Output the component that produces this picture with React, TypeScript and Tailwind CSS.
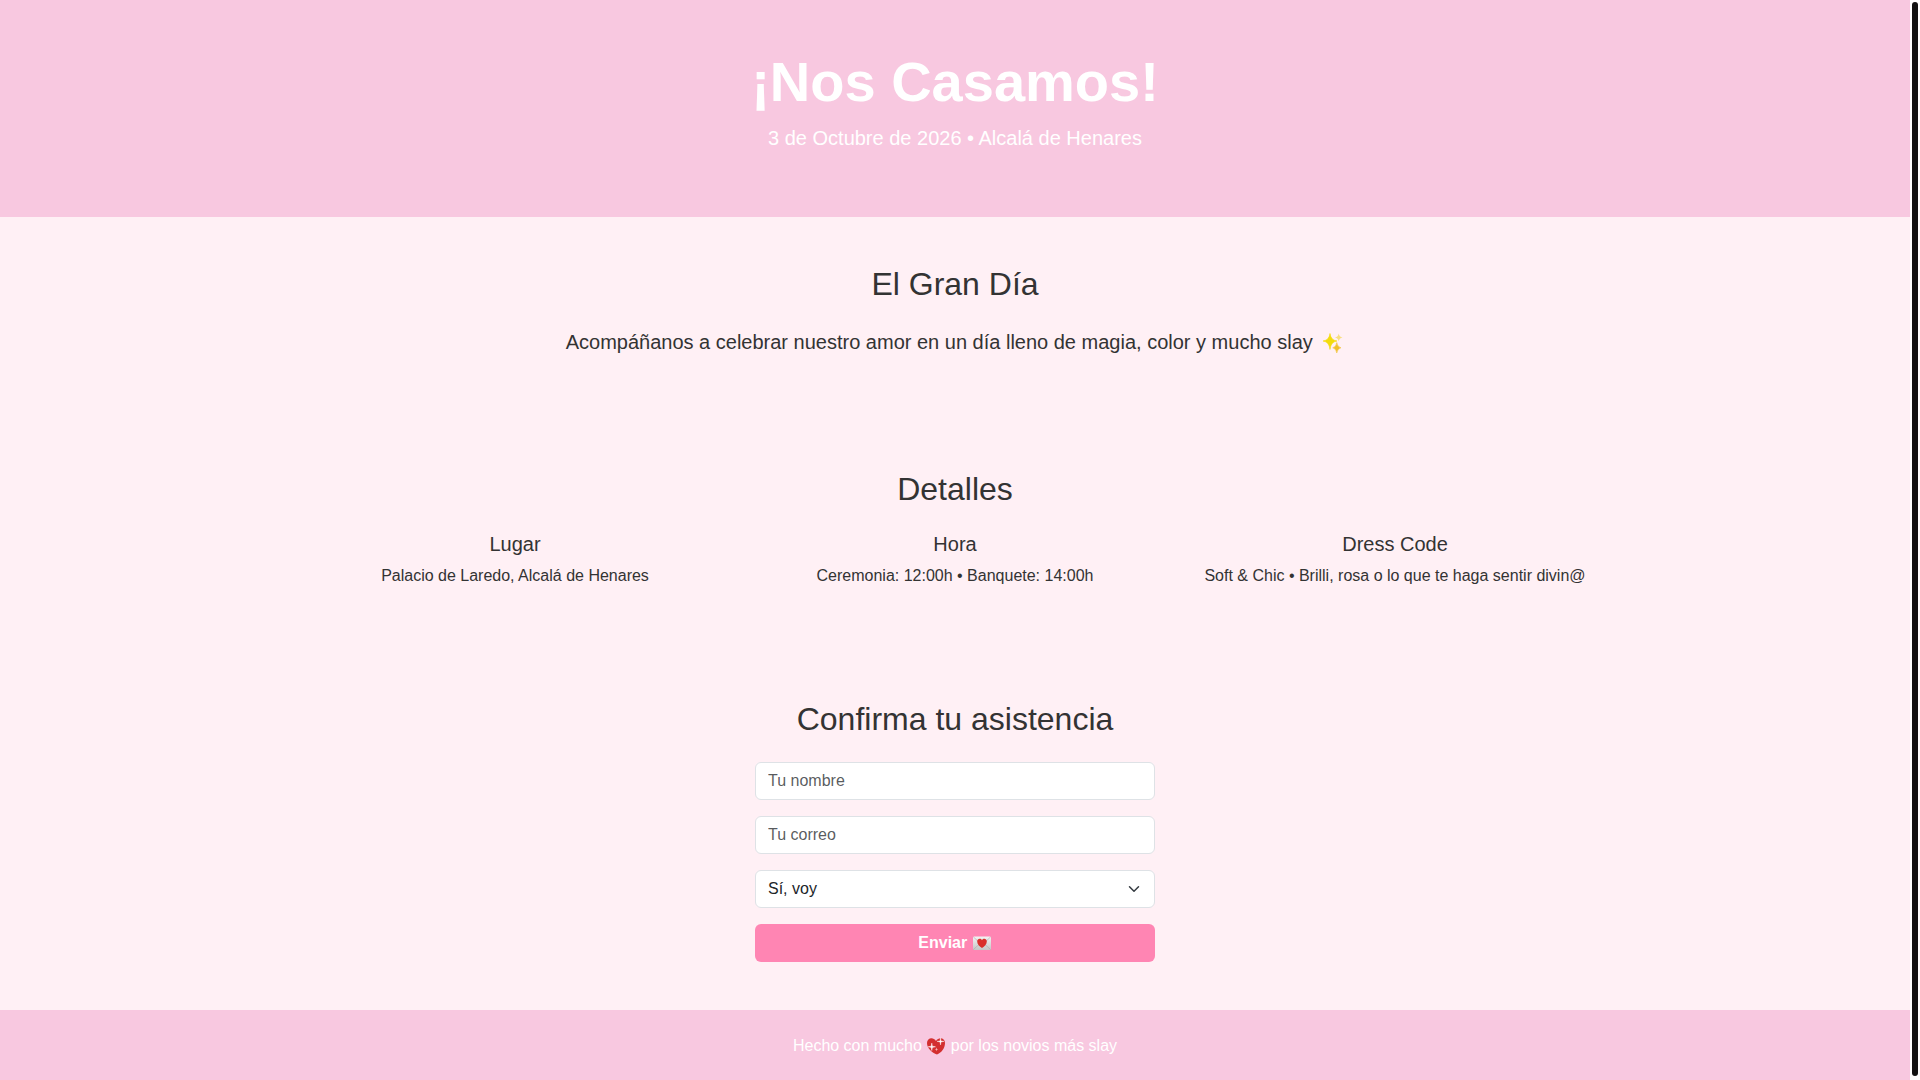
import React, { useState } from 'react';

interface SectionProps {
  title: string;
  children: React.ReactNode;
}

const details = [
  { title: 'Lugar', text: 'Palacio de Laredo, Alcalá de Henares' },
  { title: 'Hora', text: 'Ceremonia: 12:00h • Banquete: 14:00h' },
  { title: 'Dress Code', text: 'Soft & Chic • Brilli, rosa o lo que te haga sentir divin@' },
];

const fieldClass =
  'block w-full h-[38px] px-3 rounded-md border border-[#dee2e6] bg-white text-base text-[#212529] placeholder:text-[#212529]/75 focus:outline-none focus:border-[#ff85b3]';

const Sparkles: React.FC = () => (
  <svg className="inline-block h-6 w-[26px] align-middle" viewBox="-2 1 26 24" role="img" aria-label="Destellos">
    <path d="M10 2.5Q10.8 9.2 17 10Q10.8 10.8 10 18.5Q9.2 10.8 3 10Q9.2 9.2 10 2.5Z" fill="#f3dc0c" stroke="#f3dc0c" strokeWidth="0.6" />
    <path d="M18.7 2.5Q19.2 6 22.5 6.6Q19.2 7.2 18.7 10.5Q18.2 7.2 15 6.6Q18.2 6 18.7 2.5Z" fill="#f8df80" />
    <path d="M16.8 11.5Q17.4 16 21 16.8Q17.4 17.6 16.8 22Q16.2 17.6 12.7 16.8Q16.2 16 16.8 11.5Z" fill="#f0c02c" stroke="#f0c02c" strokeWidth="0.5" />
  </svg>
);

const LoveLetter: React.FC = () => (
  <svg className="inline-block h-4 w-5 align-middle" viewBox="0 1 20 16" role="img" aria-label="Carta de amor">
    <defs>
      <linearGradient id="paper" x1="0" y1="0" x2="0" y2="1">
        <stop offset="0" stopColor="#f3f3f3" />
        <stop offset="1" stopColor="#c6c6c6" />
      </linearGradient>
    </defs>
    <rect x="1" y="1.5" width="18" height="13.5" rx="1.2" fill="url(#paper)" />
    <path d="M1.5 14.5 8 8.5M18.5 14.5 12 8.5M1.5 2 10 10 18.5 2" fill="none" stroke="#aaa" strokeWidth="0.6" />
    <path
      d="M10 13C7.5 11.3 5.2 9.3 5.2 6.5C5.2 3.6 8.7 3 10 5.2C11.3 3 14.8 3.6 14.8 6.5C14.8 9.3 12.5 11.3 10 13Z"
      fill="#da2f2b"
    />
  </svg>
);

const SparklingHeart: React.FC = () => (
  <svg className="inline-block h-5 w-5 align-middle" viewBox="0 1 20 20" role="img" aria-label="Corazón brillante">
    <path
      d="M11 18.5C6 16.5 1 12.5 1 7C1 1.5 7.5 .5 10 5C12.5 .5 19 1.5 19 7C19 12.5 15 17 11 18.5Z"
      fill="#d32f2f"
    />
    <path d="M14.5 1.8 15 4.9 18 5.4 15 5.9 14.5 9 14 5.9 11 5.4 14 4.9Z" fill="#fff" stroke="#fff" strokeWidth="0.4" />
    <path d="M5.8 7 6.4 10.2 9.5 10.8 6.4 11.4 5.8 14.6 5.2 11.4 2 10.8 5.2 10.2Z" fill="#fff" stroke="#fff" strokeWidth="0.4" />
    <path d="M10.5 11.5 11 13 12.3 13.4 11 13.8 10.5 15.3 10 13.8 8.7 13.4 10 13Z" fill="#f6b9b9" />
  </svg>
);

const Section: React.FC<SectionProps> = ({ title, children }) => (
  <section className="py-12 px-3 text-center">
    <h2 className="mb-6 text-[32px] leading-[38px] font-medium">{title}</h2>
    {children}
  </section>
);

const RsvpForm: React.FC = () => {
  const [name, setName] = useState('');
  const [email, setEmail] = useState('');
  const [attending, setAttending] = useState('si');

  return (
    <form
      className="mx-auto flex w-full max-w-[400px] flex-col gap-4"
      onSubmit={(e) => e.preventDefault()}
    >
      <input
        type="text"
        aria-label="Tu nombre"
        placeholder="Tu nombre"
        className={fieldClass}
        value={name}
        onChange={(e) => setName(e.target.value)}
      />
      <input
        type="email"
        aria-label="Tu correo"
        placeholder="Tu correo"
        className={fieldClass}
        value={email}
        onChange={(e) => setEmail(e.target.value)}
      />
      <div className="relative">
        <select
          aria-label="Asistencia"
          className={`${fieldClass} appearance-none pr-9`}
          value={attending}
          onChange={(e) => setAttending(e.target.value)}
        >
          <option value="si">Sí, voy</option>
          <option value="no">No puedo ir</option>
        </select>
        <svg
          className="pointer-events-none absolute inset-y-0 right-[13px] my-auto h-3 w-4"
          viewBox="0 0 16 16"
          fill="none"
          stroke="#343a40"
          strokeWidth="2"
          strokeLinecap="round"
          strokeLinejoin="round"
        >
          <path d="m2 5 6 6 6-6" />
        </svg>
      </div>
      <button
        type="submit"
        className="h-[38px] w-full rounded-md bg-[#ff85b3] text-base font-bold text-white hover:bg-[#ff6fa5]"
      >
        Enviar <LoveLetter />
      </button>
    </form>
  );
};

export default function App() {
  return (
    <div className="flex h-screen bg-[#fff0f5] font-['Liberation_Sans',sans-serif] text-base text-[#333]">
      <div className="min-w-0 flex-1 overflow-y-auto [scrollbar-width:none]">
        <header className="bg-[#f8c8e0] px-3 py-12 text-center text-white">
          <h1 className="mb-2 text-[56px] leading-[67px] font-bold">¡Nos Casamos!</h1>
          <p className="mb-4 text-xl leading-[30px]">3 de Octubre de 2026 • Alcalá de Henares</p>
        </header>

        <main>
          <Section title="El Gran Día">
            <p className="mb-4 text-xl leading-[31px]">
              Acompáñanos a celebrar nuestro amor en un día lleno de magia, color y mucho slay <Sparkles />
            </p>
          </Section>

          <Section title="Detalles">
            <div className="mx-auto grid max-w-[1320px] md:grid-cols-3">
              {details.map((item) => (
                <div key={item.title} className="px-3">
                  <h5 className="mb-2 text-xl leading-6 font-medium">{item.title}</h5>
                  <p className="mb-4">{item.text}</p>
                </div>
              ))}
            </div>
          </Section>

          <Section title="Confirma tu asistencia">
            <RsvpForm />
          </Section>
        </main>

        <footer className="bg-[#f8c8e0] px-3 py-6 text-center text-white">
          <p>
            Hecho con mucho <SparklingHeart /> por los novios más slay
          </p>
        </footer>
      </div>

      {/* Scroll rail */}
      <div className="flex w-2.5 flex-col bg-white px-0.5 pt-0.5 pb-1">
        <div className="flex-1 rounded-full bg-[#111]" />
      </div>
    </div>
  );
}
